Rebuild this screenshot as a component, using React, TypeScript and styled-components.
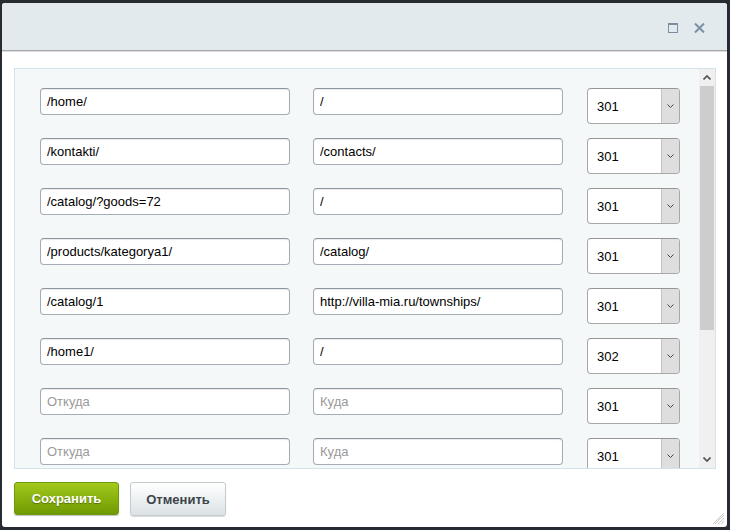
import React from "react";
import styled, { createGlobalStyle } from "styled-components";

const Global = createGlobalStyle`
  html, body { margin: 0; padding: 0; }
  body {
    background: #272b32;
    font-family: "Liberation Sans", Arial, sans-serif;
    width: 730px; height: 530px; overflow: hidden;
  }
`;

const Win = styled.div`
  position: relative;
  margin: 3px 3px 0 2px;
  width: 725px;
  height: 524px;
  background: #fff;
  border-radius: 3px;
  overflow: hidden;
  display: flex;
  flex-direction: column;
`;

const Header = styled.div`
  height: 48px;
  flex: none;
  background: #e2eaed;
  border-bottom: 1px solid #a7aaad;
  box-shadow: 0 1px 0 #dcdcdc;
  display: flex;
  align-items: center;
  justify-content: flex-end;
  gap: 16px;
  padding-right: 22px;
  padding-top: 2px;
  box-sizing: border-box;
`;

const IconBtn = styled.span`
  display: flex;
  width: 11px;
  height: 11px;
  align-items: center;
  justify-content: center;
`;

const Body = styled.div`
  padding: 17px 11px 0 12px;
`;

const Panel = styled.div`
  height: 399px;
  border: 1px solid #d4e2e9;
  background: #f5f8f9;
  display: flex;
`;

const Rows = styled.div`
  flex: 1;
  overflow: hidden;
  padding: 19px 0 0 25px;
  display: flex;
  flex-direction: column;
`;

const Row = styled.div`
  height: 50px;
  flex: none;
  display: flex;
  align-items: flex-start;
`;

const Field = styled.input`
  box-sizing: border-box;
  width: 250px;
  height: 27px;
  margin-right: ${(p: { $gap: number }) => p.$gap}px;
  border: 1px solid #a4acb5;
  border-top-color: #8d959e;
  border-radius: 4px;
  background: #fff;
  box-shadow: inset 0 1px 1px rgba(0,0,0,0.08);
  padding: 0 6px;
  font-family: "Liberation Sans", Arial, sans-serif;
  font-size: 13px;
  color: #000;
  outline: none;
  &::placeholder { color: #9a9a9a; }
`;

const Select = styled.div`
  box-sizing: border-box;
  width: 93px;
  height: 36px;
  border: 1px solid #a8a8a8;
  border-top-color: #969696;
  border-radius: 4px;
  background: #fff;
  display: flex;
  overflow: hidden;
`;

const SelectValue = styled.div`
  flex: 1;
  padding-left: 9px;
  display: flex;
  align-items: center;
  font-size: 13px;
  color: #000;
`;

const SelectArrow = styled.div`
  width: 17px;
  background: #dedede;
  border-left: 1px solid #c4c4c4;
  display: flex;
  align-items: center;
  justify-content: center;
`;

const Scroll = styled.div`
  width: 16px;
  flex: none;
  background: #f0f0f0;
  display: flex;
  flex-direction: column;
`;

const ScrollBtn = styled.div`
  height: 17px;
  flex: none;
  display: flex;
  align-items: center;
  justify-content: center;
`;

const Thumb = styled.div`
  height: 244px;
  flex: none;
  margin: 0 1px;
  background: #cdcdcd;
`;

const Track = styled.div`
  flex: 1;
`;

const Footer = styled.div`
  padding: 13px 0 0 12px;
  display: flex;
  gap: 11px;
  align-items: flex-start;
`;

const SaveBtn = styled.button`
  width: 105px;
  height: 33px;
  border: 1px solid #6d9a0c;
  border-radius: 3px;
  background: linear-gradient(#a3c91b, #6f9a02);
  box-shadow: 0 1px 1px rgba(0,0,0,0.25);
  color: #fff;
  font-family: "Liberation Sans", Arial, sans-serif;
  font-weight: bold;
  font-size: 13px;
  text-shadow: 0 1px 1px rgba(0,0,0,0.35);
  cursor: pointer;
`;

const CancelBtn = styled.button`
  width: 96px;
  height: 34px;
  border: 1px solid #c4cbcf;
  border-radius: 3px;
  background: linear-gradient(#ffffff, #dbe2e5);
  box-shadow: 0 1px 1px rgba(0,0,0,0.15);
  color: #3d444a;
  font-family: "Liberation Sans", Arial, sans-serif;
  font-weight: bold;
  font-size: 13px;
  cursor: pointer;
`;

const Grip = styled.svg`
  position: absolute;
  right: 2px;
  bottom: 2px;
`;

type Rule = { from: string; to: string; code: string };

const rules: Rule[] = [
  { from: "/home/", to: "/", code: "301" },
  { from: "/kontakti/", to: "/contacts/", code: "301" },
  { from: "/catalog/?goods=72", to: "/", code: "301" },
  { from: "/products/kategorya1/", to: "/catalog/", code: "301" },
  { from: "/catalog/1", to: "http://villa-mia.ru/townships/", code: "301" },
  { from: "/home1/", to: "/", code: "302" },
  { from: "", to: "", code: "301" },
  { from: "", to: "", code: "301" },
];

export default function App() {
  return (
    <>
      <Global />
      <Win>
        <Header>
          <IconBtn>
            <svg width="10" height="10" viewBox="0 0 10 10">
              <rect x="0.5" y="0.5" width="9" height="9" fill="none" stroke="#7b8ea2" />
              <rect x="0" y="0" width="10" height="2" fill="#7b8ea2" />
            </svg>
          </IconBtn>
          <IconBtn>
            <svg width="11" height="10" viewBox="0 0 11 10">
              <path d="M1 0.5 L10 9.5 M10 0.5 L1 9.5" stroke="#7b8ea2" strokeWidth="2" />
            </svg>
          </IconBtn>
        </Header>
        <Body>
          <Panel>
            <Rows>
              {rules.map((r, i) => (
                <Row key={i}>
                  <Field $gap={23} defaultValue={r.from} placeholder="Откуда" />
                  <Field $gap={24} defaultValue={r.to} placeholder="Куда" />
                  <Select>
                    <SelectValue>{r.code}</SelectValue>
                    <SelectArrow>
                      <svg width="7" height="4" viewBox="0 0 7 4">
                        <path d="M0.5 0.5 L3.5 3.5 L6.5 0.5" fill="none" stroke="#444" />
                      </svg>
                    </SelectArrow>
                  </Select>
                </Row>
              ))}
            </Rows>
            <Scroll>
              <ScrollBtn>
                <svg width="8" height="5" viewBox="0 0 8 5">
                  <path d="M0.5 4.5 L4 1 L7.5 4.5" fill="none" stroke="#505050" strokeWidth="1.6" />
                </svg>
              </ScrollBtn>
              <Thumb />
              <Track />
              <ScrollBtn>
                <svg width="8" height="5" viewBox="0 0 8 5">
                  <path d="M0.5 0.5 L4 4 L7.5 0.5" fill="none" stroke="#505050" strokeWidth="1.6" />
                </svg>
              </ScrollBtn>
            </Scroll>
          </Panel>
        </Body>
        <Footer>
          <SaveBtn>Сохранить</SaveBtn>
          <CancelBtn>Отменить</CancelBtn>
        </Footer>
        <Grip width="12" height="12" viewBox="0 0 12 12">
          <path d="M11 2 L2 11 M11 5 L5 11 M11 8 L8 11 M11 0 L0 11" stroke="#b8b8b8" strokeWidth="0.8" />
        </Grip>
      </Win>
    </>
  );
}
